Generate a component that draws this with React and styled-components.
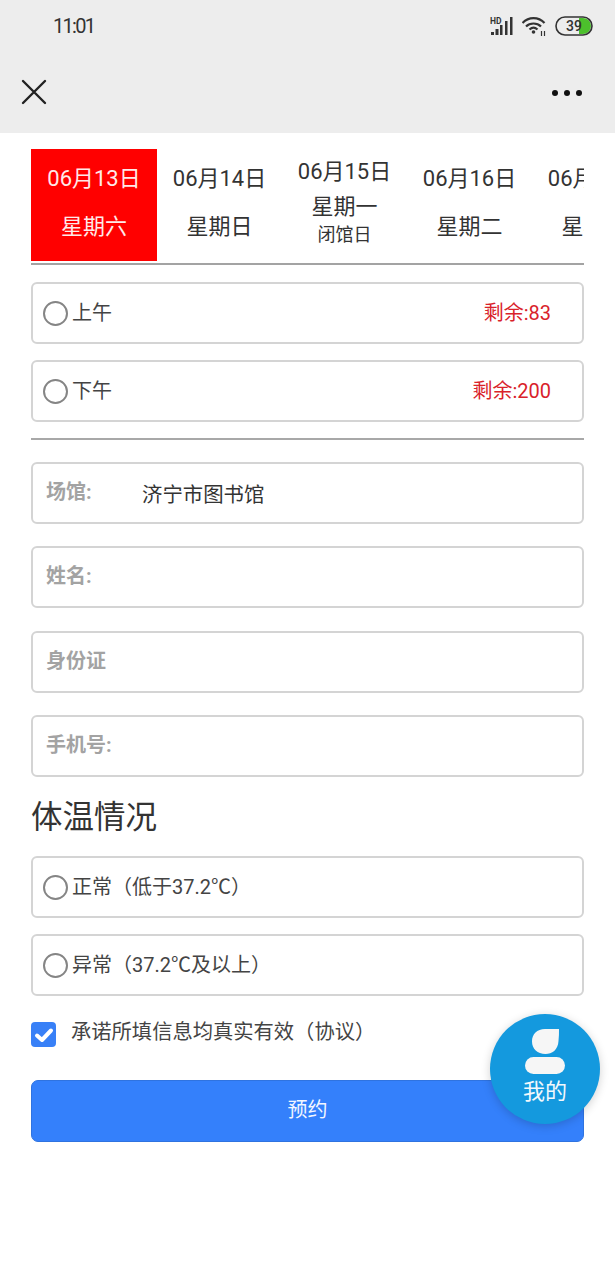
import React from "react";
import styled, { createGlobalStyle } from "styled-components";

const DAYS = [
  { date: "06月13日", week: "星期六", active: true },
  { date: "06月14日", week: "星期日" },
  { date: "06月15日", week: "星期一", note: "闭馆日" },
  { date: "06月16日", week: "星期二" },
  { date: "06月17日", week: "星期三" },
];

const Global = createGlobalStyle`
  html, body {
    margin: 0;
    padding: 0;
    background: #fff;
  }
  body {
    font-family: Roboto, "Noto Sans CJK SC", sans-serif;
    color: #333;
  }
  * {
    box-sizing: border-box;
  }
`;

const Page = styled.div`
  position: relative;
  width: 615px;
  height: 1280px;
  overflow: hidden;
`;

const Header = styled.header`
  height: 133px;
  background: #ededed;
`;

const StatusBar = styled.div`
  height: 52px;
  padding: 0 22px 0 53px;
  display: flex;
  align-items: center;
  justify-content: space-between;
`;

const Time = styled.span`
  font-size: 20px;
  letter-spacing: -1.7px;
  color: #333;
`;

const StatusIcons = styled.div`
  display: flex;
  align-items: center;
  gap: 8px;
`;

const NavBar = styled.div`
  height: 81px;
  padding: 0 32px 0 19px;
  display: flex;
  align-items: center;
  justify-content: space-between;
`;

const Content = styled.main`
  padding: 16px 31px 0;
`;

const DateStrip = styled.div`
  display: flex;
  overflow: hidden;
  height: 116px;
  border-bottom: 2px solid #a3a3a3;
`;

const DayTab = styled.div`
  flex: 0 0 ${(p) => (p.$active ? "126px" : "125px")};
  height: 112px;
  display: flex;
  flex-direction: column;
  align-items: center;
  justify-content: ${(p) => (p.$note ? "flex-start" : "center")};
  padding-top: ${(p) => (p.$note ? "8px" : "0")};
  padding-bottom: ${(p) => (p.$note ? "0" : "5px")};
  background: ${(p) => (p.$active ? "#ff0000" : "transparent")};
  color: ${(p) => (p.$active ? "#ffe9e9" : "#333")};
  white-space: nowrap;
`;

const DayDate = styled.div`
  font-size: 22px;
  line-height: 30px;
  height: ${(p) => (p.$note ? "35px" : "48px")};
`;

const DayWeek = styled.div`
  font-size: 22px;
  line-height: 30px;
`;

const DayNote = styled.div`
  font-size: 18px;
  line-height: 25px;
`;

const Row = styled.div`
  height: 62px;
  display: flex;
  align-items: center;
  margin-top: ${(p) => p.$top || 16}px;
  padding: 0 31px 0 10px;
  border: 2px solid #d4d4d4;
  border-radius: 6px;
  background: #fff;
`;

const Radio = styled.span`
  flex: none;
  width: 25px;
  height: 25px;
  margin-right: 4px;
  border: 2px solid #858585;
  border-radius: 50%;
`;

const RowText = styled.span`
  margin-top: -4px;
  font-size: 20px;
  color: #444;
  flex: 1;
`;

const Remain = styled.span`
  margin-top: -4px;
  font-size: 20px;
  color: #d9222a;
`;

const Divider = styled.div`
  height: 2px;
  margin-top: 16px;
  background: #a8a8a8;
`;

const Field = styled(Row)`
  padding: 0 13px;
  margin-top: ${(p) => p.$top || 22}px;
`;

const FieldLabel = styled.span`
  flex: 0 0 96px;
  margin-top: -6px;
  font-size: 20px;
  font-weight: 700;
  color: #a3a3a3;
`;

const FieldValue = styled.span`
  font-size: 20.4px;
  color: #333;
`;

const SectionTitle = styled.h2`
  margin: 19px 0 0;
  height: 44px;
  font-size: 31.5px;
  line-height: 44px;
  font-weight: 400;
  color: #333;
`;

const Agreement = styled.div`
  display: flex;
  margin-top: 26px;
  height: 26px;
`;

const CheckBox = styled.span`
  flex: none;
  width: 25px;
  height: 25px;
  margin-right: 15px;
  display: flex;
  align-items: center;
  justify-content: center;
  border-radius: 4px;
  background: #3880f7;
`;

const AgreementText = styled.span`
  margin-top: -4px;
  font-size: 20.3px;
  line-height: 28px;
  color: #444;
`;

const SubmitButton = styled.button`
  display: block;
  width: 100%;
  height: 62px;
  margin-top: 32px;
  border: 1px solid #2f73e0;
  border-radius: 7px;
  background: #3480fb;
  color: #f2f6ff;
  font-family: inherit;
  font-size: 20px;
  padding: 0 0 6px;
`;

const MineButton = styled.div`
  position: absolute;
  left: 490px;
  top: 1014px;
  width: 110px;
  height: 110px;
  border-radius: 50%;
  background: #1499de;
  box-shadow: 0 2px 10px rgba(0, 0, 0, 0.18);
  display: flex;
  flex-direction: column;
  align-items: center;
  padding-top: 15px;
  color: #f2f8fc;
`;

const MineLabel = styled.span`
  margin-top: 2px;
  font-size: 22px;
  line-height: 30px;
`;

const SignalIcon = () => (
  <svg width="24" height="21" viewBox="0 0 24 21">
    <text x="0" y="7.5" fontSize="8.5" fontWeight="700" fontFamily="Roboto, sans-serif" fill="#333">
      HD
    </text>
    <rect x="1" y="16" width="3" height="3" fill="#333" />
    <rect x="5.5" y="13" width="3" height="6" fill="#333" />
    <rect x="10" y="9" width="2.5" height="10" fill="#333" />
    <rect x="15" y="5" width="2.5" height="14" fill="#333" />
    <rect x="20" y="1" width="2.5" height="18" fill="#333" />
  </svg>
);

const WifiIcon = () => (
  <svg width="25" height="21" viewBox="0 0 25 21" fill="none" stroke="#333" strokeWidth="2.2">
    <path d="M0.5 7 C6.5 0.5 16.5 0.5 22.5 7" />
    <path d="M4 10.5 C8 6.5 15 6.5 19 10.5" />
    <path d="M7.5 13.5 C10 11.2 13 11.2 15.5 13.5" />
    <circle cx="11.5" cy="16" r="1.8" fill="#333" stroke="none" />
    <path d="M19.5 15 v5 M22.5 15 v5" strokeWidth="1.2" />
  </svg>
);

const BatteryIcon = () => (
  <svg width="38" height="20" viewBox="0 0 38 20">
    <path d="M24 2 H28 a8 8 0 0 1 0 16 H24 Z" fill="#4cc02c" />
    <rect x="1" y="1" width="36" height="18" rx="9" fill="none" stroke="#333" strokeWidth="1.6" />
    <text x="11" y="15" fontSize="14" fontWeight="500" fontFamily="Roboto, sans-serif" fill="#333">
      39
    </text>
  </svg>
);

const CloseIcon = () => (
  <svg width="30" height="30" viewBox="0 0 30 30" fill="none" stroke="#222" strokeWidth="2.4" strokeLinecap="round">
    <path d="M4 3 L26 25 M26 3 L4 25" />
  </svg>
);

const MoreIcon = () => (
  <svg width="32" height="8" viewBox="0 0 32 8" fill="#111">
    <circle cx="4" cy="4" r="3" />
    <circle cx="16" cy="4" r="3" />
    <circle cx="28" cy="4" r="3" />
  </svg>
);

const CheckIcon = () => (
  <svg width="20" height="20" viewBox="0 0 20 20" fill="none" stroke="#fff" strokeWidth="4" strokeLinecap="round" strokeLinejoin="round">
    <path d="M3 10.5 L8 15 L17 5.5" />
  </svg>
);

const PersonIcon = () => (
  <svg width="40" height="46" viewBox="0 0 40 46" fill="#f6f6f6">
    <path d="M20 0 H34 C34 4 34 8 33.5 12 C33 21 27 25 20.5 25 C12.5 25 7 20 7 12.5 C7 5 12 0 20 0 Z" />
    <rect x="0" y="28" width="40" height="17" rx="8.5" />
  </svg>
);

export default function App() {
  return (
    <Page>
      <Global />
      <Header>
        <StatusBar>
          <Time>11:01</Time>
          <StatusIcons>
            <SignalIcon />
            <WifiIcon />
            <BatteryIcon />
          </StatusIcons>
        </StatusBar>
        <NavBar>
          <CloseIcon />
          <MoreIcon />
        </NavBar>
      </Header>
      <Content>
        <DateStrip>
          {DAYS.map((day) => (
            <DayTab key={day.date} $active={day.active} $note={day.note}>
              <DayDate $note={day.note}>{day.date}</DayDate>
              <DayWeek>{day.week}</DayWeek>
              {day.note && <DayNote>{day.note}</DayNote>}
            </DayTab>
          ))}
        </DateStrip>
        <Row $top={17}>
          <Radio />
          <RowText>上午</RowText>
          <Remain>剩余:83</Remain>
        </Row>
        <Row>
          <Radio />
          <RowText>下午</RowText>
          <Remain>剩余:200</Remain>
        </Row>
        <Divider />
        <Field>
          <FieldLabel>场馆:</FieldLabel>
          <FieldValue>济宁市图书馆</FieldValue>
        </Field>
        <Field>
          <FieldLabel>姓名:</FieldLabel>
        </Field>
        <Field $top={23}>
          <FieldLabel>身份证</FieldLabel>
        </Field>
        <Field>
          <FieldLabel>手机号:</FieldLabel>
        </Field>
        <SectionTitle>体温情况</SectionTitle>
        <Row>
          <Radio />
          <RowText>正常（低于37.2℃）</RowText>
        </Row>
        <Row>
          <Radio />
          <RowText>异常（37.2℃及以上）</RowText>
        </Row>
        <Agreement>
          <CheckBox>
            <CheckIcon />
          </CheckBox>
          <AgreementText>承诺所填信息均真实有效（协议）</AgreementText>
        </Agreement>
        <SubmitButton>预约</SubmitButton>
      </Content>
      <MineButton>
        <PersonIcon />
        <MineLabel>我的</MineLabel>
      </MineButton>
    </Page>
  );
}
